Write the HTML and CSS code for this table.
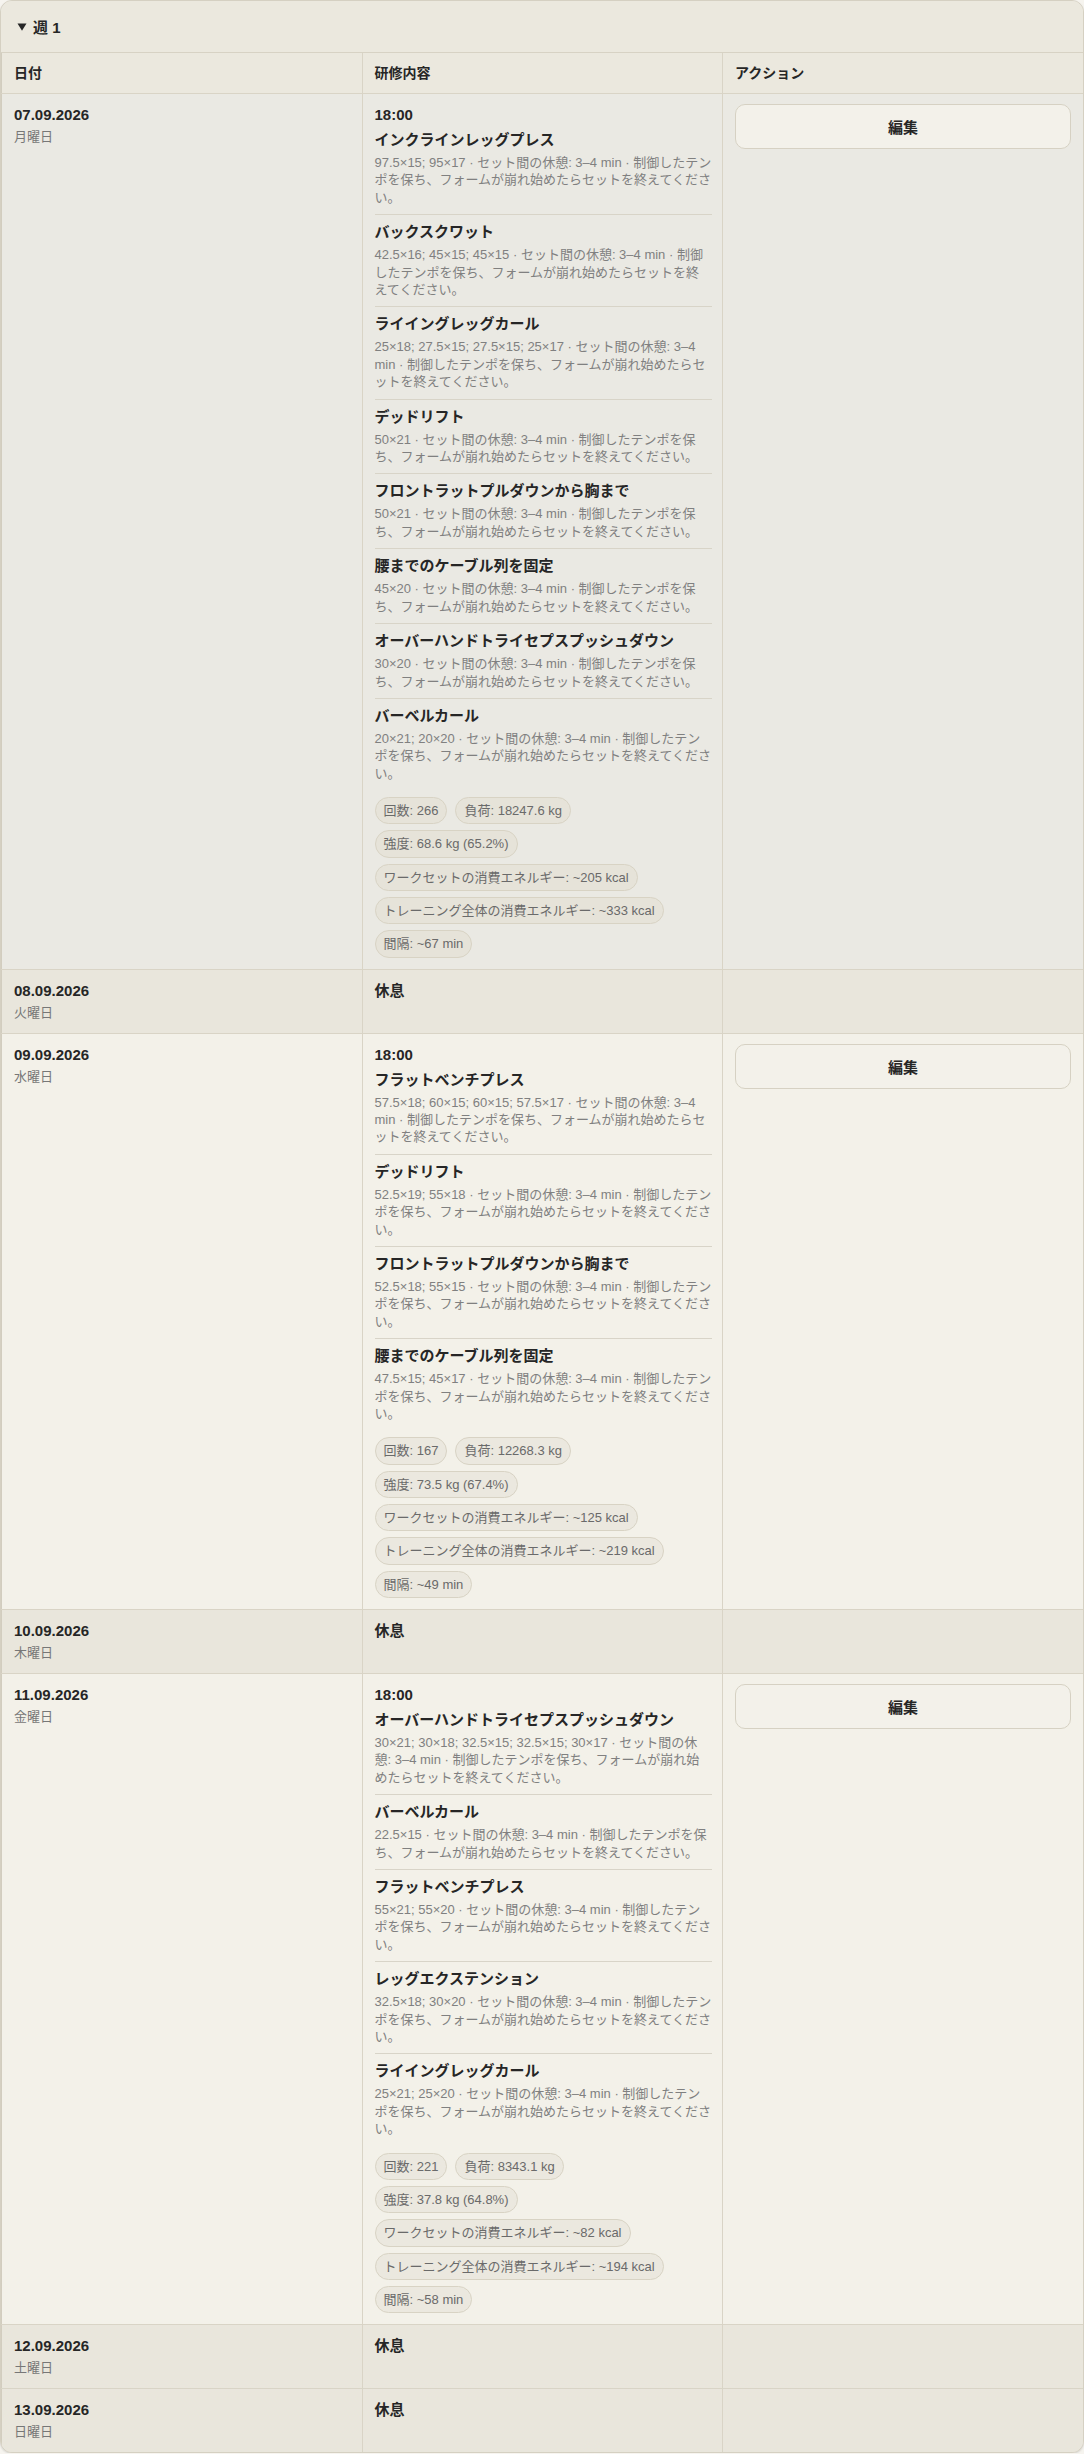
FILE: index.html
```html
<!DOCTYPE html>
<html lang="ja">
<head>
<meta charset="utf-8">
<title>週 1</title>
<link rel="stylesheet" href="styles.css">
</head>
<body>
<section class="week">
  <div class="week-head"><svg class="caret" width="10" height="8" viewBox="0 0 10 8" aria-hidden="true"><polygon points="0.5,0.5 9.5,0.5 5,7.8" fill="#262626"/></svg><span>週 1</span></div>
  <table class="plan">
    <colgroup><col class="c"><col class="c"><col class="c"></colgroup>
    <thead>
      <tr><th>日付</th><th>研修内容</th><th>アクション</th></tr>
    </thead>
    <tbody>
      <tr class="day-row current">
        <td><div class="date">07.09.2026</div><div class="dow">月曜日</div></td>
        <td class="content">
          <div class="time">18:00</div>
          <div class="ex"><div class="ex-name">インクラインレッグプレス</div><div class="ex-desc">97.5×15; 95×17 · セット間の休憩: 3–4 min · 制御したテンポを保ち、フォームが崩れ始めたらセットを終えてください。</div></div>
          <div class="ex"><div class="ex-name">バックスクワット</div><div class="ex-desc">42.5×16; 45×15; 45×15 · セット間の休憩: 3–4 min · 制御したテンポを保ち、フォームが崩れ始めたらセットを終えてください。</div></div>
          <div class="ex"><div class="ex-name">ライイングレッグカール</div><div class="ex-desc">25×18; 27.5×15; 27.5×15; 25×17 · セット間の休憩: 3–4 min · 制御したテンポを保ち、フォームが崩れ始めたらセットを終えてください。</div></div>
          <div class="ex"><div class="ex-name">デッドリフト</div><div class="ex-desc">50×21 · セット間の休憩: 3–4 min · 制御したテンポを保ち、フォームが崩れ始めたらセットを終えてください。</div></div>
          <div class="ex"><div class="ex-name">フロントラットプルダウンから胸まで</div><div class="ex-desc">50×21 · セット間の休憩: 3–4 min · 制御したテンポを保ち、フォームが崩れ始めたらセットを終えてください。</div></div>
          <div class="ex"><div class="ex-name">腰までのケーブル列を固定</div><div class="ex-desc">45×20 · セット間の休憩: 3–4 min · 制御したテンポを保ち、フォームが崩れ始めたらセットを終えてください。</div></div>
          <div class="ex"><div class="ex-name">オーバーハンドトライセプスプッシュダウン</div><div class="ex-desc">30×20 · セット間の休憩: 3–4 min · 制御したテンポを保ち、フォームが崩れ始めたらセットを終えてください。</div></div>
          <div class="ex"><div class="ex-name">バーベルカール</div><div class="ex-desc">20×21; 20×20 · セット間の休憩: 3–4 min · 制御したテンポを保ち、フォームが崩れ始めたらセットを終えてください。</div></div>
          <div class="chips">
            <span class="chip">回数: 266</span><span class="chip">負荷: 18247.6 kg</span><span class="chip">強度: 68.6 kg (65.2%)</span><span class="chip">ワークセットの消費エネルギー: ~205 kcal</span><span class="chip">トレーニング全体の消費エネルギー: ~333 kcal</span><span class="chip">間隔: ~67 min</span>
          </div>
        </td>
        <td><button class="edit" type="button">編集</button></td>
      </tr>
      <tr class="day-row rest">
        <td><div class="date">08.09.2026</div><div class="dow">火曜日</div></td>
        <td class="content"><div class="rest-label">休息</div></td>
        <td></td>
      </tr>
      <tr class="day-row train">
        <td><div class="date">09.09.2026</div><div class="dow">水曜日</div></td>
        <td class="content">
          <div class="time">18:00</div>
          <div class="ex"><div class="ex-name">フラットベンチプレス</div><div class="ex-desc">57.5×18; 60×15; 60×15; 57.5×17 · セット間の休憩: 3–4 min · 制御したテンポを保ち、フォームが崩れ始めたらセットを終えてください。</div></div>
          <div class="ex"><div class="ex-name">デッドリフト</div><div class="ex-desc">52.5×19; 55×18 · セット間の休憩: 3–4 min · 制御したテンポを保ち、フォームが崩れ始めたらセットを終えてください。</div></div>
          <div class="ex"><div class="ex-name">フロントラットプルダウンから胸まで</div><div class="ex-desc">52.5×18; 55×15 · セット間の休憩: 3–4 min · 制御したテンポを保ち、フォームが崩れ始めたらセットを終えてください。</div></div>
          <div class="ex"><div class="ex-name">腰までのケーブル列を固定</div><div class="ex-desc">47.5×15; 45×17 · セット間の休憩: 3–4 min · 制御したテンポを保ち、フォームが崩れ始めたらセットを終えてください。</div></div>
          <div class="chips">
            <span class="chip">回数: 167</span><span class="chip">負荷: 12268.3 kg</span><span class="chip">強度: 73.5 kg (67.4%)</span><span class="chip">ワークセットの消費エネルギー: ~125 kcal</span><span class="chip">トレーニング全体の消費エネルギー: ~219 kcal</span><span class="chip">間隔: ~49 min</span>
          </div>
        </td>
        <td><button class="edit" type="button">編集</button></td>
      </tr>
      <tr class="day-row rest">
        <td><div class="date">10.09.2026</div><div class="dow">木曜日</div></td>
        <td class="content"><div class="rest-label">休息</div></td>
        <td></td>
      </tr>
      <tr class="day-row train">
        <td><div class="date">11.09.2026</div><div class="dow">金曜日</div></td>
        <td class="content">
          <div class="time">18:00</div>
          <div class="ex"><div class="ex-name">オーバーハンドトライセプスプッシュダウン</div><div class="ex-desc">30×21; 30×18; 32.5×15; 32.5×15; 30×17 · セット間の休憩: 3–4 min · 制御したテンポを保ち、フォームが崩れ始めたらセットを終えてください。</div></div>
          <div class="ex"><div class="ex-name">バーベルカール</div><div class="ex-desc">22.5×15 · セット間の休憩: 3–4 min · 制御したテンポを保ち、フォームが崩れ始めたらセットを終えてください。</div></div>
          <div class="ex"><div class="ex-name">フラットベンチプレス</div><div class="ex-desc">55×21; 55×20 · セット間の休憩: 3–4 min · 制御したテンポを保ち、フォームが崩れ始めたらセットを終えてください。</div></div>
          <div class="ex"><div class="ex-name">レッグエクステンション</div><div class="ex-desc">32.5×18; 30×20 · セット間の休憩: 3–4 min · 制御したテンポを保ち、フォームが崩れ始めたらセットを終えてください。</div></div>
          <div class="ex"><div class="ex-name">ライイングレッグカール</div><div class="ex-desc">25×21; 25×20 · セット間の休憩: 3–4 min · 制御したテンポを保ち、フォームが崩れ始めたらセットを終えてください。</div></div>
          <div class="chips">
            <span class="chip">回数: 221</span><span class="chip">負荷: 8343.1 kg</span><span class="chip">強度: 37.8 kg (64.8%)</span><span class="chip">ワークセットの消費エネルギー: ~82 kcal</span><span class="chip">トレーニング全体の消費エネルギー: ~194 kcal</span><span class="chip">間隔: ~58 min</span>
          </div>
        </td>
        <td><button class="edit" type="button">編集</button></td>
      </tr>
      <tr class="day-row rest">
        <td><div class="date">12.09.2026</div><div class="dow">土曜日</div></td>
        <td class="content"><div class="rest-label">休息</div></td>
        <td></td>
      </tr>
      <tr class="day-row rest">
        <td><div class="date">13.09.2026</div><div class="dow">日曜日</div></td>
        <td class="content"><div class="rest-label">休息</div></td>
        <td></td>
      </tr>
    </tbody>
  </table>
</section>
</body>
</html>
```

FILE: styles.css
```css
html, body {
  margin: 0;
  padding: 0;
  background: #f6f4ef;
}
body {
  font-family: "Liberation Sans", "Noto Sans CJK JP", sans-serif;
  color: #262626;
}
.week {
  border: 1px solid #d5d0c2;
  border-radius: 12px;
  overflow: hidden;
  background: #ebe8de;
  box-shadow: 0 1px 2px rgba(0, 0, 0, 0.12);
}
.week-head {
  height: 51px;
  display: flex;
  align-items: center;
  padding: 0 16px;
  font-size: 15px;
  font-weight: bold;
  border-bottom: 1px solid #d7d2c4;
  background: #ebe8de;
  gap: 6px;
}
.caret {
  display: block;
  flex: none;
}
.plan {
  width: 100%;
  border-collapse: collapse;
  table-layout: fixed;
}
.plan .c {
  width: 33.333%;
}
.plan th,
.plan td {
  border-left: 1px solid #d9d4c6;
  border-bottom: 1px solid #d9d4c6;
  text-align: left;
  vertical-align: top;
  padding: 10px 12px 11px;
}
.plan td.content {
  padding-right: 10.5px;
}
.plan tr > :first-child {
  border-left: 1px solid #d2cdbf;
}
.plan tbody tr:last-child td {
  border-bottom: none;
}
.plan th {
  font-size: 14px;
  line-height: 18px;
  font-weight: bold;
  background: #ebe8de;
  padding: 11px 12px 11px;
}
.day-row.current td {
  background: #eae9e3;
}
.day-row.rest td {
  background: #e9e6dc;
}
.day-row.train td {
  background: #f3f1e9;
}
.date {
  font-size: 15px;
  font-weight: bold;
  line-height: 22px;
}
.dow {
  font-size: 13px;
  line-height: 19px;
  margin-top: 1px;
  color: #777;
}
.time {
  font-size: 15px;
  font-weight: bold;
  line-height: 22px;
}
.rest-label {
  font-size: 15px;
  font-weight: bold;
  line-height: 22px;
}
.ex {
  padding: 7px 0 8px;
  border-top: 1px solid #d8d4c8;
}
.time + .ex {
  border-top: none;
  padding-top: 4px;
}
.ex-name {
  font-size: 15px;
  font-weight: bold;
  line-height: 20px;
}
.ex-desc {
  margin-top: 4px;
  font-size: 13px;
  line-height: 17.4px;
  color: #808080;
}
.chips {
  display: flex;
  flex-wrap: wrap;
  gap: 6px 8px;
  margin-top: 7px;
}
.chip {
  display: inline-block;
  font-size: 13px;
  line-height: 17.3px;
  padding: 4px 8px;
  border: 1px solid #d8d3c4;
  border-radius: 999px;
  background: #e6e3d9;
  color: #6a6a6a;
}
.train .chip {
  background: #ebe8df;
}
.edit {
  display: block;
  width: 100%;
  height: 45px;
  font-family: inherit;
  font-size: 15px;
  font-weight: bold;
  color: #262626;
  background: #f3f1ea;
  border: 1px solid #d6d1c3;
  border-radius: 10px;
  cursor: pointer;
}
```
